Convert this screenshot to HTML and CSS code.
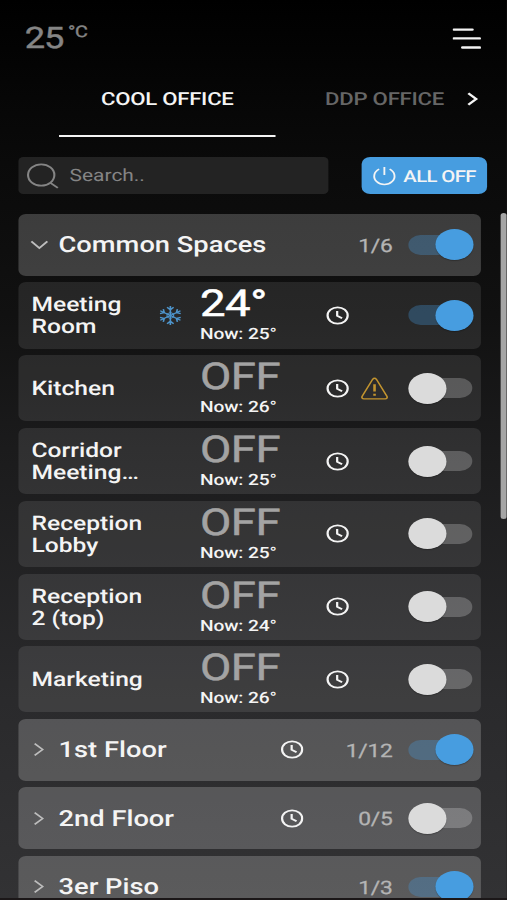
FILE: index.html
```html
<!DOCTYPE html>
<html lang="en">
<head>
<meta charset="utf-8">
<title>Climate control</title>
<link rel="stylesheet" href="styles.css">
</head>
<body>
<svg class="sprite" aria-hidden="true">
  <symbol id="clock" viewBox="0 0 20 20"><circle cx="10" cy="10" r="8.6"/><path d="M9.6 5.3v5l4.2 2.7"/></symbol>
  <symbol id="down" viewBox="0 0 16 10"><path d="M1.5 1.3 8 8l6.500-6.700"/></symbol>
  <symbol id="right" viewBox="0 0 10 16"><path d="M1.300 1.500 8.500 8l-7.200 6.500"/></symbol>
  <symbol id="snow" viewBox="0 0 20 22">
    <path id="arm" d="M10 11V1M7.200 2.400 10 5l2.800-2.600"/>
    <use href="#arm" transform="rotate(60 10 11)"/><use href="#arm" transform="rotate(120 10 11)"/><use href="#arm" transform="rotate(180 10 11)"/><use href="#arm" transform="rotate(240 10 11)"/><use href="#arm" transform="rotate(300 10 11)"/>
    <path d="M10 7.800 12.800 9.400v3.200L10 14.200 7.200 12.600V9.400Z" stroke-width=".9"/>
  </symbol>
  <symbol id="warn" viewBox="0 0 24 24"><path d="M10.400 2.400Q12 .2 13.600 2.400L22.600 20.300Q23.200 22.700 21 22.800H3Q.8 22.700 1.400 20.300Z"/><path class="mark" d="M12 7.500v7.500M12 17.500v2"/></symbol>
</svg>
<div class="app">
  <header class="top">
    <div class="outdoor"><span class="value">25</span><span class="unit">°C</span></div>
    <svg class="menu" viewBox="0 0 23 22"><path d="M1 1.600h15M1 10.400h21M8 19.500h14"/></svg>
  </header>
  <nav class="tabs">
    <div class="tab active">COOL OFFICE</div>
    <div class="tab next">DDP OFFICE</div>
    <svg class="more"><use href="#right"/></svg>
  </nav>
  <div class="tools">
    <div class="search"><svg class="lens" viewBox="0 0 26 26"><circle cx="11.500" cy="12" r="10.700"/><path d="m19 19.800 6 5"/></svg><span>Search..</span></div>
    <div class="all-off"><svg class="power" viewBox="0 0 20 20"><path d="M5.500 2.800a8.700 8.700 0 1 0 9 0M10 .5v8.500"/></svg><span>ALL OFF</span></div>
  </div>
  <main class="list">
    <section class="group"><svg class="chev down"><use href="#down"/></svg><h2>Common Spaces</h2><span></span><span class="count">1/6</span><i class="toggle on"></i></section>

    <section class="room"><h3>Meeting Room</h3><svg class="snow"><use href="#snow"/></svg><div class="temp set"><b>24°</b><small>Now: 25°</small></div><svg class="clock"><use href="#clock"/></svg><span></span><i class="toggle on"></i></section>
    <section class="room"><h3>Kitchen</h3><span></span><div class="temp"><b>OFF</b><small>Now: 26°</small></div><svg class="clock"><use href="#clock"/></svg><svg class="warn"><use href="#warn"/></svg><i class="toggle"></i></section>
    <section class="room"><h3>Corridor Meeting…</h3><span></span><div class="temp"><b>OFF</b><small>Now: 25°</small></div><svg class="clock"><use href="#clock"/></svg><span></span><i class="toggle"></i></section>
    <section class="room"><h3>Reception Lobby</h3><span></span><div class="temp"><b>OFF</b><small>Now: 25°</small></div><svg class="clock"><use href="#clock"/></svg><span></span><i class="toggle"></i></section>
    <section class="room"><h3>Reception 2 (top)</h3><span></span><div class="temp"><b>OFF</b><small>Now: 24°</small></div><svg class="clock"><use href="#clock"/></svg><span></span><i class="toggle"></i></section>
    <section class="room"><h3>Marketing</h3><span></span><div class="temp"><b>OFF</b><small>Now: 26°</small></div><svg class="clock"><use href="#clock"/></svg><span></span><i class="toggle"></i></section>

    <section class="group"><svg class="chev"><use href="#right"/></svg><h2>1st Floor</h2><svg class="clock"><use href="#clock"/></svg><span class="count">1/12</span><i class="toggle on"></i></section>
    <section class="group"><svg class="chev"><use href="#right"/></svg><h2>2nd Floor</h2><svg class="clock"><use href="#clock"/></svg><span class="count">0/5</span><i class="toggle"></i></section>
    <section class="group"><svg class="chev"><use href="#right"/></svg><h2>3er Piso</h2><span></span><span class="count">1/3</span><i class="toggle on"></i></section>
  </main>
  <div class="scrollbar"></div>
</div>
</body>
</html>
```
FILE: styles.css
```css
* { box-sizing: border-box; }
html, body { margin: 0; height: 900px; overflow: hidden; background: #1b1718; }
body { font-family: Roboto, "Liberation Sans", sans-serif; color: #f4f4f4; text-rendering: geometricPrecision; }
.sprite { position: absolute; width: 0; height: 0; }
svg { display: block; fill: none; stroke: currentColor; }
h2, h3 { margin: 0; font-weight: 500; }

.app {
  position: relative;
  width: 412.2px;
  height: 897.5px;
  overflow: hidden;
  padding-left: 14.6px;
  transform: scaleX(1.23);
  transform-origin: 0 0;
  background: linear-gradient(#000 0, #0a0a0a 18%, #111 35%, #1b1b1c 50%, #2a2a2c 78%, #323234 100%);
}

.top { height: 75px; display: flex; justify-content: space-between; padding: 22px 21.500px 0 5.600px; }
.outdoor { display: flex; color: #858585; -webkit-text-stroke: .4px #858585; }
.value { font-size: 29.500px; line-height: 35px; letter-spacing: -1px; }
.unit { font-size: 16px; line-height: 19px; margin-left: 4px; letter-spacing: -.3px; }
.menu { width: 23px; height: 22px; margin-top: 6px; stroke-width: 2.400; stroke-linecap: round; }

.tabs { height: 62px; display: flex; align-items: flex-start; }
.tab { font-size: 18px; font-weight: 500; line-height: 50px; letter-spacing: -.2px; white-space: nowrap; }
.active { width: 176.500px; margin-left: 33.200px; height: 62px; text-align: center; border-bottom: 2.500px solid #f4f4f4; }
.next { width: 97px; margin-left: 40px; color: #666; }
.more { width: 10px; height: 14px; margin: 17px 0 0 18px; stroke-width: 2.500; }

.tools { display: flex; margin-top: 20px; height: 37px; }
.search { width: 252px; display: flex; align-items: center; border-radius: 4px; background: #232323; color: #858585; font-size: 17px; padding-left: 7.500px; }
.lens { width: 26px; height: 26px; margin-right: 8.500px; stroke-width: 1.700; }
.search span { margin-top: 0; }
.all-off { width: 102px; margin-left: 27.300px; border-radius: 7px; background: #479de0; display: flex; align-items: center; padding: 0 0 0 9px; font-size: 16.500px; font-weight: 500; letter-spacing: -.5px; white-space: nowrap; }
.all-off span { margin: 4px 0 0 6px; }
.power { width: 19px; height: 20px; stroke-width: 1.600; }

.list { width: 376px; margin-top: 20px; display: flex; flex-direction: column; gap: 6.600px; }
.group, .room { flex: none; display: grid; align-items: center; border-radius: 6px; }
.group { height: 61.800px; grid-template-columns: 33px 168.500px 42px 61px 52px; background: rgba(255,255,255,.2); }
.room { height: 66.200px; padding-left: 11px; grid-template-columns: 100px 25px 110px 27px 34px 62px; background: rgba(255,255,255,.095); }
.group .toggle { margin-left: 12.500px; }
.room .toggle { margin-left: 10px; }
h2 { font-size: 22.200px; line-height: 28px; padding-top: 1px; white-space: nowrap; }
h3 { font-size: 20px; line-height: 22px; }
.chev { width: 9px; height: 15px; margin-left: 12px; stroke-width: 1.700; color: #bdbdbd; }
.chev.down { width: 16px; height: 10px; margin-left: 9px; }
.count { font-size: 18.500px; color: #b4b4b4; text-align: right; padding-top: 2px; letter-spacing: -.2px; -webkit-text-stroke: .3px #b4b4b4; }
.clock { width: 19px; height: 19px; justify-self: center; stroke-width: 1.900; }
.snow { width: 19px; height: 21px; justify-self: center; color: #4d94cb; stroke-width: 1.400; }
.warn { width: 23px; height: 23px; justify-self: center; color: #c2942f; stroke-width: 1.400; }
.mark { stroke-width: 2.200; }
.temp { padding-left: 12px; align-self: start; display: flex; flex-direction: column; white-space: nowrap; }
.temp b { font-size: 37px; font-weight: 400; line-height: 36px; margin-top: 5px; letter-spacing: -.4px; color: #a3a3a3; -webkit-text-stroke: .5px; }
.temp.set b { color: #fff; }
.temp small { font-size: 15.600px; font-weight: 500; line-height: 20px; margin-top: 1px; letter-spacing: -.1px; }

.toggle { width: 52px; height: 20px; border-radius: 10px; background: rgba(255,255,255,.22); display: flex; align-items: center; }
.toggle::before { content: ""; flex: none; width: 31px; height: 31px; border-radius: 50%; background: #dbdbdb; box-shadow: 0 1px 1px rgba(0,0,0,.25); }
.toggle.on { background: rgba(71,157,224,.3); justify-content: flex-end; }
.toggle.on::before { background: #479de0; margin-right: -1.500px; }

.scrollbar { position: absolute; right: 0; top: 213px; width: 5.700px; height: 306px; border-radius: 4px; background: #a5a5a5; }
```
